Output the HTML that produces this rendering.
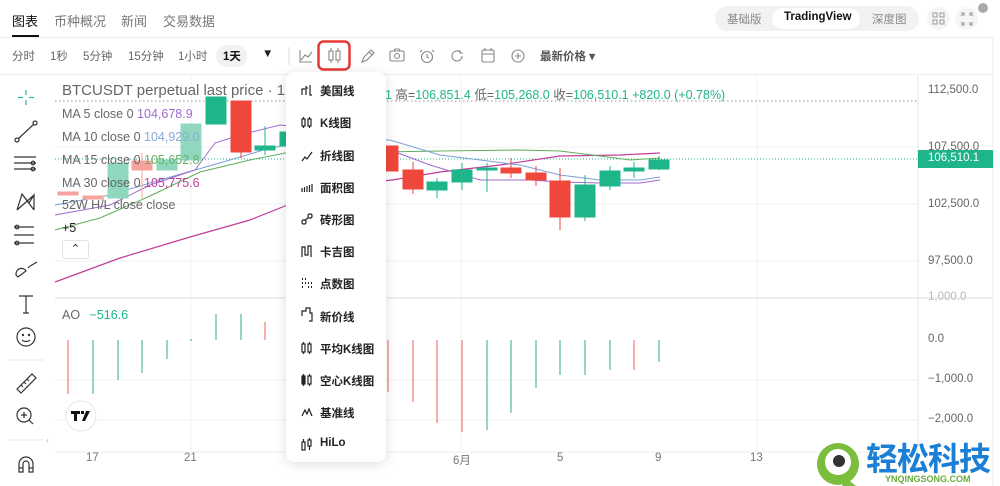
<!DOCTYPE html>
<html><head><meta charset="utf-8"><style>
*{margin:0;padding:0;box-sizing:border-box}
body{width:1000px;height:486px;overflow:hidden;background:#fff;font-family:"Liberation Sans","Noto Sans CJK SC",sans-serif;position:relative;color:#222}
.a{position:absolute;white-space:nowrap}
.tab{font-size:13px;color:#777;top:11px}
.tb{font-size:11.5px;color:#666;top:48px}
.leg{font-size:12.5px;color:#666}
.mi{position:absolute;left:320px;font-size:11.5px;color:#222;font-weight:bold}
.ax{font-size:11.5px;color:#666;left:928px}
.tx{font-size:11.5px;color:#777;top:452px}
</style></head><body>
<!-- header -->
<div class="a tab" style="left:12px;color:#111">图表</div>
<div class="a" style="left:12px;top:35px;width:27px;height:2px;background:#111"></div>
<div class="a tab" style="left:54px">币种概况</div>
<div class="a tab" style="left:121px">新闻</div>
<div class="a tab" style="left:163px">交易数据</div>
<div class="a" style="left:0;top:37px;width:993px;height:1px;background:#eee"></div>
<div class="a" style="left:715px;top:6px;width:204px;height:25px;border-radius:13px;background:#f1f2f4"></div>
<div class="a" style="left:772px;top:8px;width:88px;height:21px;border-radius:11px;background:#fff"></div>
<div class="a" style="left:727px;top:11px;font-size:11.5px;color:#888">基础版</div>
<div class="a" style="left:784px;top:11px;font-size:11.5px;color:#111;font-weight:bold">TradingView</div>
<div class="a" style="left:872px;top:11px;font-size:11.5px;color:#888">深度图</div>
<div class="a" style="left:927px;top:7px;width:23px;height:23px;border-radius:12px;background:#f4f5f6"></div>
<div class="a" style="left:955px;top:7px;width:23px;height:23px;border-radius:12px;background:#f4f5f6"></div>
<svg class="a" style="left:0;top:0" width="1000" height="486">
<g fill="none" stroke="#999" stroke-width="1"><rect x="933" y="13" width="4" height="4"/><rect x="940" y="13" width="4" height="4"/><rect x="933" y="20" width="4" height="4"/><rect x="940" y="20" width="4" height="4"/>
<path d="M961 16l3-3M961 13h3v3M973 16l-3-3M973 13h-3v3M961 22l3 3M961 25h3v-3M973 22l-3 3M973 25h-3v-3"/></g>
<circle cx="983" cy="8" r="5" fill="#aaa"/>
</svg>
<!-- toolbar -->
<div class="a tb" style="left:12px">分时</div>
<div class="a tb" style="left:50px">1秒</div>
<div class="a tb" style="left:83px">5分钟</div>
<div class="a tb" style="left:128px">15分钟</div>
<div class="a tb" style="left:178px">1小时</div>
<div class="a" style="left:216px;top:45px;width:31px;height:22px;border-radius:11px;background:#f1f2f4"></div>
<div class="a tb" style="left:223px;color:#111;font-weight:bold">1天</div>
<div class="a tb" style="left:262px;color:#222">▼</div>
<div class="a tb" style="left:540px;font-weight:bold;color:#555">最新价格 ▾</div>
<div class="a" style="left:0;top:74px;width:993px;height:1px;background:#eee"></div>
<svg class="a" style="left:0;top:0" width="1000" height="486">
<line x1="289" y1="47" x2="289" y2="65" stroke="#ddd"/>
<g fill="none" stroke="#888" stroke-width="1.1">
<path d="M300 50v12h12M301 60l4-5 3 2 4-5"/>
<rect x="318.5" y="41.5" width="31" height="28" rx="5" stroke="#e53935" stroke-width="2.5"/>
<rect x="329" y="51" width="4" height="9"/><rect x="336" y="51" width="4" height="9"/><path d="M331 48v3M331 60v3M338 48v3M338 60v3"/>
<path d="M362 62l2-5 7-7 3 3-7 7zM369 52l3 3"/>
<rect x="390" y="51" width="14" height="10" rx="1.5"/><circle cx="397" cy="56" r="2.5"/><path d="M394 51l1-2h4l1 2"/>
<circle cx="427" cy="57" r="5.5"/><path d="M427 54v3l2 1M422 50l-2 2M432 50l2 2"/>
<path d="M462 56a5 5 0 1 1-2-4M460 50v3h3"/>
<rect x="482" y="50" width="12" height="12" rx="1.5"/><path d="M482 54h12M485 48v3M491 48v3"/>
<circle cx="518" cy="56" r="6"/><path d="M518 53v6M515 56h6"/>
</g>
</svg>
<!-- chart svg -->
<svg class="a" style="left:0;top:0" width="1000" height="486">
<g stroke="#f2f2f2"><line x1="191" y1="76" x2="191" y2="452"/><line x1="461" y1="76" x2="461" y2="452"/><line x1="757" y1="76" x2="757" y2="452"/>
<line x1="55" y1="147" x2="918" y2="147"/><line x1="55" y1="204" x2="918" y2="204"/><line x1="55" y1="261" x2="918" y2="261"/>
<line x1="55" y1="380" x2="918" y2="380"/><line x1="55" y1="420" x2="918" y2="420"/></g>
<line x1="55" y1="298" x2="993" y2="298" stroke="#ddd"/>
<line x1="55" y1="452" x2="918" y2="452" stroke="#eee"/>
<line x1="918" y1="76" x2="918" y2="470" stroke="#e6e6e6"/>
<line x1="993" y1="38" x2="993" y2="486" stroke="#eee"/>
<line x1="55" y1="101" x2="918" y2="101" stroke="#999" stroke-dasharray="1.5 2.5"/>
<line x1="55" y1="159" x2="918" y2="159" stroke="#1fb58a" stroke-dasharray="1 2"/>
<polyline fill="none" stroke="#c13d9a" stroke-width="1.2" points="55,282 120,258 190,237 250,220 300,200 340,185 392,180 440,172 500,165 560,156 620,155 660,153"/>
<polyline fill="none" stroke="#5fae5f" stroke-width="1" points="55,230 100,218 150,196 200,172 250,160 300,150 380,152 440,151 520,150 560,151 600,156 630,160 660,158"/>
<polyline fill="none" stroke="#7aa0d8" stroke-width="1" points="55,205 110,195 160,180 195,170 230,160 270,148 320,140 390,140 440,155 480,160 520,165 560,175 600,180 640,180 660,177"/>
<polyline fill="none" stroke="#9d6bd0" stroke-width="1" points="55,215 110,205 150,185 195,170 215,143 240,135 280,125 330,130 390,150 430,165 480,180 530,180 560,182 600,183 640,183 660,180"/>
<g stroke-width="1">
<g fill="#f5a39b" stroke="#f5a39b"><rect x="58" y="192" width="20" height="3"/><rect x="83" y="196" width="20" height="3"/><line x1="142" y1="153" x2="142" y2="198"/><rect x="132" y="161" width="20" height="9"/></g>
<g fill="#8fd8bd" stroke="#8fd8bd"><rect x="108" y="163" width="20" height="35"/><rect x="157" y="160" width="20" height="10"/><rect x="181" y="124" width="20" height="36"/></g>
<g fill="#1fb58a" stroke="#1fb58a"><rect x="206" y="97" width="20" height="27"/><line x1="265" y1="126" x2="265" y2="155"/><rect x="255" y="146" width="20" height="4"/><rect x="280" y="132" width="10" height="14"/>
<line x1="437" y1="178" x2="437" y2="198"/><rect x="427" y="182" width="20" height="8"/>
<line x1="462" y1="163" x2="462" y2="190"/><rect x="452" y="170" width="20" height="12"/>
<line x1="487" y1="163" x2="487" y2="192"/><rect x="477" y="168" width="20" height="2"/>
<line x1="585" y1="175" x2="585" y2="221"/><rect x="575" y="185" width="20" height="32"/>
<line x1="610" y1="166" x2="610" y2="190"/><rect x="600" y="171" width="20" height="15"/>
<line x1="634" y1="162" x2="634" y2="178"/><rect x="624" y="168" width="20" height="3"/>
<line x1="659" y1="156" x2="659" y2="170"/><rect x="649" y="160" width="20" height="9"/></g>
<g fill="#f0473c" stroke="#f0473c"><line x1="241" y1="101" x2="241" y2="158"/><rect x="231" y="101" width="20" height="51"/>
<rect x="378" y="146" width="20" height="25"/>
<line x1="413" y1="162" x2="413" y2="194"/><rect x="403" y="170" width="20" height="19"/>
<line x1="511" y1="158" x2="511" y2="178"/><rect x="501" y="168" width="20" height="5"/>
<line x1="536" y1="166" x2="536" y2="186"/><rect x="526" y="173" width="20" height="7"/>
<line x1="560" y1="168" x2="560" y2="230"/><rect x="550" y="181" width="20" height="36"/></g>
</g>
<g stroke-width="1.2">
<g stroke="#f07a73"><line x1="68" y1="340" x2="68" y2="394"/><line x1="265" y1="322" x2="265" y2="340"/><line x1="388" y1="340" x2="388" y2="392"/><line x1="413" y1="340" x2="413" y2="402"/><line x1="437" y1="340" x2="437" y2="423"/><line x1="462" y1="340" x2="462" y2="432"/><line x1="634" y1="340" x2="634" y2="370"/><line x1="290" y1="340" x2="290" y2="350"/></g>
<g stroke="#4fb9a0"><line x1="93" y1="340" x2="93" y2="394"/><line x1="118" y1="340" x2="118" y2="380"/><line x1="142" y1="340" x2="142" y2="373"/><line x1="167" y1="340" x2="167" y2="359"/><line x1="191" y1="339" x2="191" y2="341"/><line x1="216" y1="314" x2="216" y2="340"/><line x1="241" y1="314" x2="241" y2="340"/>
<line x1="487" y1="340" x2="487" y2="430"/><line x1="511" y1="340" x2="511" y2="413"/><line x1="536" y1="340" x2="536" y2="388"/><line x1="560" y1="340" x2="560" y2="375"/><line x1="585" y1="340" x2="585" y2="375"/><line x1="610" y1="340" x2="610" y2="370"/><line x1="659" y1="340" x2="659" y2="362"/></g>
</g>
<rect x="918" y="150" width="75" height="18" fill="#1fb58a"/>
<circle cx="81" cy="416" r="15" fill="#fff" stroke="#e6e6e6"/>
<path d="M71 411h9v3h-3v7h-3v-7h-3zM81 411h3v3h-3zM86 411h4l-5 10h-3z" fill="#111"/>
<g fill="none" stroke="#333" stroke-width="1.2">
<path d="M26 90v5M26 100v5M18 97.5h5M29 97.5h5" stroke="#2fb6a8"/>
<circle cx="17" cy="140" r="2"/><circle cx="35" cy="123" r="2"/><path d="M18.5 138.5l15-14"/>
<path d="M14 157h22M14 163h22M14 169h22"/><circle cx="33" cy="163" r="1.8"/><circle cx="33" cy="169" r="1.8"/>
<path d="M17 210l5-16 7 9 5-8v15M17 210l17-15M22 194l12 16"/>
<path d="M14 227h20M14 235h20M14 243h20"/><circle cx="17" cy="227" r="1.8"/><circle cx="17" cy="243" r="1.8"/>
<path d="M16 275c0-8 8-8 10-4l-8 6zM28 268c3-3 6-4 9-6"/>
<path d="M19 296h14M26 296v17M23 313h6"/>
<circle cx="26" cy="337" r="9"/><circle cx="23" cy="335" r=".6"/><circle cx="29" cy="335" r=".6"/><path d="M22 340c2 2 6 2 8 0"/>
<path d="M17 389l15-15 4 4-15 15zM21 385l2 2M24 382l2 2M27 379l2 2"/>
<circle cx="24" cy="415" r="7"/><path d="M24 412v6M21 415h6M29 420l4 4"/>
<path d="M19 472v-8a7 7 0 0 1 14 0v8h-4v-8a3 3 0 0 0-6 0v8zM19 468h4M29 468h4"/>
</g>
<g stroke="#e8e8e8"><line x1="8" y1="360" x2="44" y2="360"/><line x1="8" y1="440" x2="44" y2="440"/></g>
<text x="46" y="443" font-size="9" fill="#bbb" font-family="Liberation Sans">‹</text>
<circle cx="838" cy="464" r="21" fill="#7bbd3c"/>
<circle cx="838" cy="462" r="13" fill="#fff"/>
<circle cx="839" cy="461" r="6" fill="#333"/>
<path d="M846 478l10 8h-14z" fill="#7bbd3c"/>
</svg>
<div class="a" style="left:62px;top:82px;font-size:15px;color:#666">BTCUSDT perpetual last price · 1</div>
<div class="a leg" style="left:385px;top:84px"><span style="color:#1fb58a">1</span> 高=<span style="color:#1fb58a">106,851.4</span> 低=<span style="color:#1fb58a">105,268.0</span> 收=<span style="color:#1fb58a">106,510.1 +820.0 (+0.78%)</span></div>
<div class="a leg" style="left:62px;top:107px">MA 5 close 0 <span style="color:#9d6bd0">104,678.9</span></div>
<div class="a leg" style="left:62px;top:130px">MA 10 close 0 <span style="color:#8aaad8">104,929.0</span></div>
<div class="a leg" style="left:62px;top:153px">MA 15 close 0 <span style="color:#6bb06b">105,652.8</span></div>
<div class="a leg" style="left:62px;top:176px">MA 30 close 0 <span style="color:#c13d9a">105,775.6</span></div>
<div class="a leg" style="left:62px;top:198px">52W H/L close close</div>
<div class="a leg" style="left:62px;top:221px;color:#222">+5</div>
<div class="a" style="left:62px;top:240px;width:27px;height:19px;border:1px solid #e3e3e3;border-radius:3px;font-size:11px;text-align:center;line-height:17px">⌃</div>
<div class="a leg" style="left:62px;top:308px">AO <span style="color:#1fb58a;margin-left:6px">−516.6</span></div>
<div class="a ax" style="top:84px">112,500.0</div>
<div class="a ax" style="top:141px">107,500.0</div>
<div class="a ax" style="top:152px;color:#fff">106,510.1</div>
<div class="a ax" style="top:198px">102,500.0</div>
<div class="a ax" style="top:255px">97,500.0</div>
<div class="a ax" style="top:291px;color:#bbb">1,000.0</div>
<div class="a ax" style="top:333px">0.0</div>
<div class="a ax" style="top:373px">−1,000.0</div>
<div class="a ax" style="top:413px">−2,000.0</div>
<div class="a tx" style="left:86px">17</div>
<div class="a tx" style="left:184px">21</div>
<div class="a tx" style="left:453px">6月</div>
<div class="a tx" style="left:557px">5</div>
<div class="a tx" style="left:655px">9</div>
<div class="a tx" style="left:750px">13</div>
<div class="a" style="left:286px;top:72px;width:100px;height:390px;background:#fff;border-radius:8px;box-shadow:0 2px 12px rgba(0,0,0,.13)"></div>
<svg class="a" style="left:0;top:0" width="1000" height="486"><g fill="none" stroke="#222" stroke-width="1.2">
<path d="M302 95v-6h3M306 86v9M306 88h2M310 85v10h2"/>
<rect x="302" y="119" width="3" height="7"/><rect x="308" y="119" width="3" height="7"/><path d="M303.5 117v2M303.5 126v2M309.5 117v2M309.5 126v2"/>
<path d="M302 161l3-4 2 2 5-7"/>
<path d="M302 192v-4M304.5 192v-5M307 192v-6M309.5 192v-7M312 192v-8"/>
<rect x="302" y="220" width="4" height="4" rx="1.5"/><rect x="308" y="214" width="4" height="4" rx="1.5"/><path d="M305 220l3-2"/>
<path d="M302 257v-10h3v8h3v-9h3v11"/>
<path d="M302 279h1M305 279h1M302 283h1M305 283h1M308 283h1M311 283h1M302 287h1M308 287h1M311 287h1" stroke-width="2"/>
<path d="M302 316v-5h4v-3h4v5h2v8h-3"/>
<rect x="302" y="344" width="3" height="8"/><rect x="308" y="344" width="3" height="8"/><path d="M303.5 342v2M303.5 352v2M309.5 342v2M309.5 352v2"/>
<rect x="302" y="376" width="3" height="8" fill="#222"/><rect x="308" y="376" width="3" height="8"/><path d="M303.5 374v2M303.5 384v2M309.5 374v2M309.5 384v2"/>
<path d="M302 416l3-6 2 4 2-5 3 7"/>
<rect x="302" y="442" width="3" height="8"/><rect x="308" y="440" width="3" height="6"/><path d="M303.5 439v3M309.5 438v2M309.5 446v4"/>
</g></svg>
<div class="mi" style="top:83px">美国线</div>
<div class="mi" style="top:115px">K线图</div>
<div class="mi" style="top:148px">折线图</div>
<div class="mi" style="top:180px">面积图</div>
<div class="mi" style="top:212px">砖形图</div>
<div class="mi" style="top:244px">卡吉图</div>
<div class="mi" style="top:276px">点数图</div>
<div class="mi" style="top:309px">新价线</div>
<div class="mi" style="top:341px">平均K线图</div>
<div class="mi" style="top:373px">空心K线图</div>
<div class="mi" style="top:405px">基准线</div>
<div class="mi" style="top:437px">HiLo</div>
<div class="a" style="left:866px;top:438px;font-size:32px;font-weight:bold;color:#1b7fd6;letter-spacing:-1px;font-family:'Noto Sans CJK SC',sans-serif;line-height:38px">轻松科技</div>
<div class="a" style="left:885px;top:474px;font-size:9px;font-weight:bold;color:#6aab3a">YNQINGSONG.COM</div>
</body></html>
